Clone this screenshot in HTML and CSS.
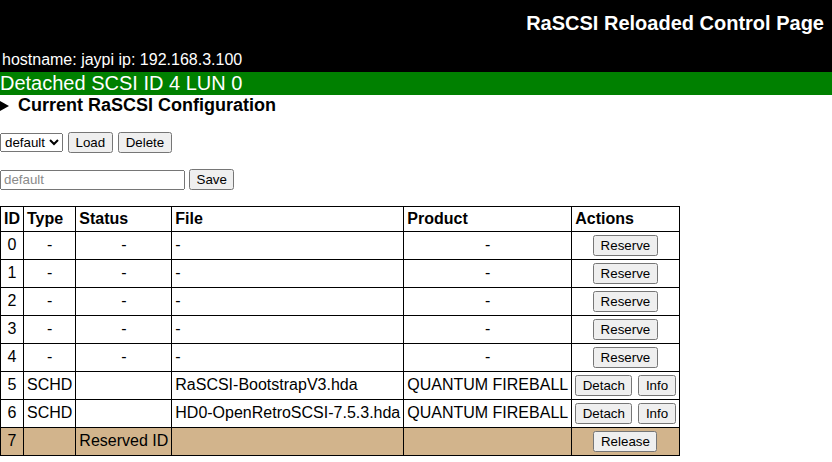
FILE: index.html
```html
<!DOCTYPE html>
<html lang="en">
<head>
<meta charset="utf-8">
<title>RaSCSI Reloaded Control Page</title>
<link rel="stylesheet" href="styles.css">
</head>
<body>
<div class="header">
  <h1 class="title">RaSCSI Reloaded Control Page</h1>
  <div class="host">hostname: jaypi ip: 192.168.3.100</div>
</div>
<div class="flash">Detached SCSI ID 4 LUN 0</div>
<details class="config" open>
  <summary class="summary"><span class="tri"></span>Current RaSCSI Configuration</summary>
</details>
<form class="row">
  <select class="sel"><option>default</option></select>
  <button type="button" class="btn gap5">Load</button>
  <button type="button" class="btn gap55">Delete</button>
</form>
<form class="row">
  <input class="name" type="text" placeholder="default">
  <button type="button" class="btn gap4">Save</button>
</form>
<table class="devices">
  <tr><th>ID</th><th>Type</th><th>Status</th><th>File</th><th>Product</th><th>Actions</th></tr>
  <tr><td class="c">0</td><td class="c">-</td><td class="c">-</td><td>-</td><td class="c">-</td><td class="c"><button type="button" class="btn">Reserve</button></td></tr>
  <tr><td class="c">1</td><td class="c">-</td><td class="c">-</td><td>-</td><td class="c">-</td><td class="c"><button type="button" class="btn">Reserve</button></td></tr>
  <tr><td class="c">2</td><td class="c">-</td><td class="c">-</td><td>-</td><td class="c">-</td><td class="c"><button type="button" class="btn">Reserve</button></td></tr>
  <tr><td class="c">3</td><td class="c">-</td><td class="c">-</td><td>-</td><td class="c">-</td><td class="c"><button type="button" class="btn">Reserve</button></td></tr>
  <tr><td class="c">4</td><td class="c">-</td><td class="c">-</td><td>-</td><td class="c">-</td><td class="c"><button type="button" class="btn">Reserve</button></td></tr>
  <tr><td class="c">5</td><td class="c">SCHD</td><td class="c"></td><td>RaSCSI-BootstrapV3.hda</td><td class="c">QUANTUM FIREBALL</td><td class="c"><button type="button" class="btn">Detach</button><button type="button" class="btn gap6">Info</button></td></tr>
  <tr><td class="c">6</td><td class="c">SCHD</td><td class="c"></td><td>HD0-OpenRetroSCSI-7.5.3.hda</td><td class="c">QUANTUM FIREBALL</td><td class="c"><button type="button" class="btn">Detach</button><button type="button" class="btn gap6">Info</button></td></tr>
  <tr class="reserved"><td class="c">7</td><td class="c"></td><td class="c">Reserved ID</td><td></td><td class="c"></td><td class="c"><button type="button" class="btn">Release</button></td></tr>
</table>
</body>
</html>
```
FILE: styles.css
```css
html, body {
  margin: 0;
  padding: 0;
  background: #fff;
  color: #000;
  font-family: "Liberation Sans", Arial, sans-serif;
  font-size: 16px;
}

.header {
  background: #000;
  color: #fff;
  padding: 12px 8px 3px 2px;
}

.title {
  margin: 0 0 16px 0;
  font-size: 20px;
  line-height: 23px;
  font-weight: bold;
  text-align: right;
}

.host {
  font-size: 16px;
  line-height: 18px;
}

.flash {
  background: #008000;
  color: #fff;
  font-size: 20px;
  line-height: 23px;
  height: 23px;
}

.config {
  margin: 0;
}

.summary {
  list-style: none;
  display: flex;
  align-items: center;
  font-size: 18px;
  font-weight: bold;
  line-height: 21px;
  height: 21px;
  cursor: pointer;
}

.summary::-webkit-details-marker {
  display: none;
}

.tri {
  width: 0;
  height: 0;
  border-left: 9px solid #000;
  border-top: 5px solid transparent;
  border-bottom: 5px solid transparent;
  margin-right: 9px;
}

.row {
  display: flex;
  align-items: center;
  height: 21px;
  margin: 16px 0;
}

.btn {
  font-family: "Liberation Sans", Arial, sans-serif;
  font-size: 13.333px;
  padding: 1px 5.5px;
  margin: 0;
}

.gap4 { margin-left: 4px; }
.gap5 { margin-left: 5px; }
.gap55 { margin-left: 5.5px; }
.gap6 { margin-left: 6px; }

.sel {
  font-family: "Liberation Sans", Arial, sans-serif;
  font-size: 13.333px;
  height: 19px;
  margin: 0;
}

.name {
  box-sizing: border-box;
  width: 185px;
  height: 20px;
  margin: 0;
  font-family: "Liberation Sans", Arial, sans-serif;
  font-size: 13.333px;
}

.name::placeholder {
  color: #8a8a8a;
}

.devices {
  border-collapse: collapse;
  border: 1px solid #000;
}

.devices th,
.devices td {
  border: 1px solid #000;
  padding: 3px;
  vertical-align: baseline;
  white-space: nowrap;
  line-height: 18px;
}

.devices th {
  text-align: left;
  font-weight: bold;
}

.devices td {
  text-align: left;
}

.devices td.c {
  text-align: center;
}

.reserved {
  background: #d2b48c;
}
```
